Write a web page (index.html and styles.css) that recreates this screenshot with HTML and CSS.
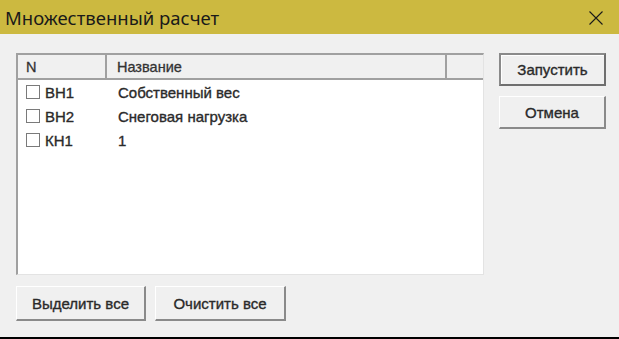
FILE: index.html
```html
<!DOCTYPE html>
<html lang="ru">
<head>
<meta charset="utf-8">
<link rel="stylesheet" href="styles.css">
</head>
<body>
<div class="window">
  <div class="titlebar">
    <span class="title">Множественный расчет</span>
    <svg class="close" width="16" height="16" viewBox="0 0 16 16"><path d="M1.5 1.5 L14.5 14.5 M14.5 1.5 L1.5 14.5" stroke="#1a1a1a" stroke-width="1.1" fill="none"/></svg>
  </div>
  <div class="content">
    <div class="main">
      <div class="list">
        <div class="header">
          <div class="hcell c1">N</div>
          <div class="hcell c2">Название</div>
          <div class="hcell c3"></div>
        </div>
        <div class="rows">
          <div class="row"><span class="cb"></span><span class="num">ВН1</span><span class="name">Собственный вес</span></div>
          <div class="row"><span class="cb"></span><span class="num">ВН2</span><span class="name">Снеговая нагрузка</span></div>
          <div class="row"><span class="cb"></span><span class="num">КН1</span><span class="name">1</span></div>
        </div>
      </div>
      <div class="bottom">
        <button class="btn b1">Выделить все</button>
        <button class="btn b2">Очистить все</button>
      </div>
    </div>
    <div class="side">
      <button class="btn default">Запустить</button>
      <button class="btn">Отмена</button>
    </div>
  </div>
</div>
</body>
</html>
```
FILE: styles.css
```css
* { box-sizing: border-box; }
html, body { margin: 0; padding: 0; }
body { width: 619px; height: 339px; overflow: hidden; background: #000; }
.window {
  width: 619px; height: 337px; background: #f0f0f0;
  display: flex; flex-direction: column;
  font-family: "Liberation Sans", Arial, sans-serif;
}
.titlebar {
  height: 34px; background: #ccb940;
  display: flex; align-items: center; justify-content: space-between;
  padding: 0 15px 0 5px;
}
.title { font-family: "Noto Sans", sans-serif; font-size: 18.5px; color: #1a1a1a; }
.close { display: block; margin-top: 1px; }
.content { flex: 1; display: flex; padding: 19px 0 0 16px; }
.main { display: flex; flex-direction: column; width: 468px; }
.list {
  height: 222px; background: #fff;
  border-top: 2px solid #a0a0a0; border-left: 2px solid #a0a0a0;
  border-right: 1px solid #e3e3e3; border-bottom: 1px solid #e3e3e3;
  display: flex; flex-direction: column;
}
.header { display: flex; height: 25px; background: #f0f0f0; border-bottom: 2px solid #a0a0a0; }
.hcell { font-size: 14.5px; color: #333; -webkit-text-stroke: 0.3px #333; display: flex; align-items: center; padding-left: 8px; border-right: 2px solid #a0a0a0; }
.c1 { width: 89px; }
.c2 { width: 340px; padding-left: 10px; }
.c3 { flex: 1; border-right: none; }
.rows { padding-top: 0; }
.row { height: 24px; display: flex; align-items: center; font-size: 15px; color: #2a2a2a; -webkit-text-stroke: 0.35px #2a2a2a; }
.cb { width: 14px; height: 14px; border: 1px solid #7a7a7a; background: #fff; margin-left: 8px; margin-right: 5px; flex: none; }
.num { width: 73px; }
.bottom { display: flex; gap: 9px; margin-top: 11px; }
.btn {
  font-family: "Liberation Sans", Arial, sans-serif; font-size: 15px; color: #2a2a2a; -webkit-text-stroke: 0.35px #2a2a2a;
  background: #f0f0f0; padding: 0;
  border-top: 1px solid #fff; border-left: 1px solid #fff;
  border-right: 2px solid #8a8a8a; border-bottom: 2px solid #8a8a8a;
  height: 35px;
}
.b1 { width: 130px; }
.b2 { width: 131px; }
.side { display: flex; flex-direction: column; gap: 10px; margin-left: 15px; width: 107px; }
.side .btn { height: 33px; }
.btn.default { border: 2px solid #6f6f6f; border-top-color: #8a8a8a; border-left-color: #8a8a8a; box-shadow: inset 1px 1px 0 #fff; }
```
